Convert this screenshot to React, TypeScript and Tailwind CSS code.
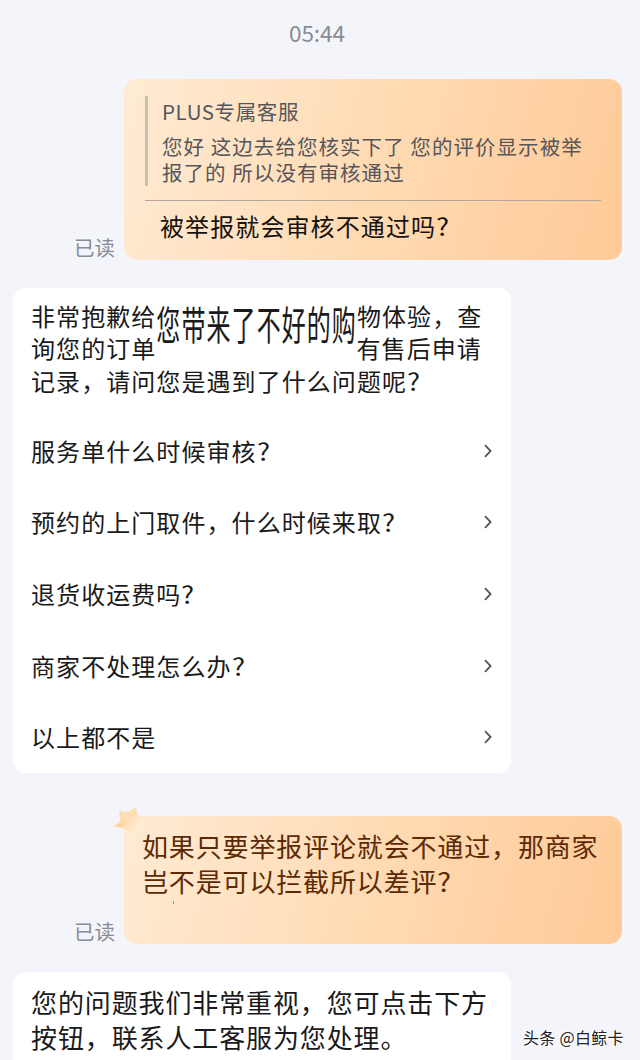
import type { ReactNode } from "react";

const questions = [
  "服务单什么时候审核",
  "预约的上门取件，什么时候来取",
  "退货收运费吗",
  "商家不处理怎么办",
];

interface SentMessageProps {
  className?: string;
  children: ReactNode;
}

function SentMessage({ className = "", children }: SentMessageProps) {
  return (
    <div className="flex items-end justify-end pr-[18px]">
      <span className="mr-[9px] text-[20.5px] leading-[26px] text-[#888b93]">已读</span>
      <div
        className={`relative w-[498px] rounded-[13px] bg-[linear-gradient(105deg,#ffebd4_0%,#ffd9b0_55%,#ffca98_100%)] ${className}`}
      >
        {children}
      </div>
    </div>
  );
}

function QuestionMark() {
  return <span className="inline-block origin-left scale-x-[1.15]">?</span>;
}

function QuestionRow({ children }: { children: ReactNode }) {
  return (
    <li className="flex h-[71.7px] items-center justify-between pr-px">
      <span>{children}</span>
      <svg className="h-[14px] w-[8px]" viewBox="0 0 8 14" fill="none">
        <path d="M1 1.2 6.6 7 1 12.8" stroke="#55565a" strokeWidth="1.8" />
      </svg>
    </li>
  );
}

function StarBadge() {
  return (
    <svg className="absolute -top-[9px] -left-[10px] h-[27px] w-[28px]" viewBox="0 0 28 27" fill="none">
      <defs>
        <linearGradient id="star" x1="2" y1="4" x2="24" y2="20" gradientUnits="userSpaceOnUse">
          <stop stopColor="#ffd49c" />
          <stop offset="0.5" stopColor="#ffdeb4" />
          <stop offset="1" stopColor="#ffe9d0" />
        </linearGradient>
      </defs>
      <path
        d="M5 5.2Q5 4 6.5 4.3L13 5.2Q16 4.6 20.5.8Q22 .2 22.2 1.8L23 6Q24 8.5 27 10L19 24 10 22Q7 19.5.8 20Q-.6 19.3.8 18.4Q6.3 14.8 6.6 12.5Z"
        fill="url(#star)"
      />
      <path d="M5.4 5 14 14 12.8 5.6Z" fill="#ffe3bd" opacity=".6" />
      <path d="M21.8 1.2 15 14 22.8 6Z" fill="#ffcf95" opacity=".4" />
      <path d="M.8 19.2 13 15 8.6 20Z" fill="#f9c48b" opacity=".5" />
    </svg>
  );
}

export default function App() {
  return (
    <main className="h-[1060px] w-[640px] overflow-hidden bg-[#f4f5fb] pt-[16px] font-['Noto_Sans_CJK_SC',sans-serif] text-[#1a1a1a]">
      <time className="block h-[34px] pr-[6px] text-center text-[22.5px] leading-[32px] text-[#888b93]">
        05:44
      </time>

      <div className="mt-[29px]">
        <SentMessage className="h-[181px] px-[21px] pt-[17px]">
          <div className="h-[90px] border-l-[3px] border-[#c9bfae] pl-[14px] text-[#55565b]">
            <p className="pt-px text-[20.5px] leading-[28px] tracking-[0.6px]">PLUS专属客服</p>
            <div className="pt-[9px] text-[20.5px] leading-[25.5px] tracking-[1.05px] whitespace-nowrap">
              <p>您好 这边去给您核实下了 您的评价显示被举</p>
              <p>报了的 所以没有审核通过</p>
            </div>
          </div>
          <div className="mt-[14px] h-px bg-[#b3a79b]" />
          <p className="mt-[9px] pl-[15px] text-[24px] leading-[32px] tracking-[1.1px] text-[#15120f]">
            被举报就会审核不通过吗
            <QuestionMark />
          </p>
        </SentMessage>
      </div>

      <section className="mt-[28px] ml-[13px] h-[485px] w-[498px] rounded-[13px] bg-white px-[18px] pt-[12px] text-[24px] tracking-[1.07px] whitespace-nowrap">
        <div className="leading-[32.3px]">
          <p>
            非常抱歉给
            <span className="inline-block h-[32px] origin-[0_5px] scale-y-[1.67] align-top">您带来了不好的购</span>
            物体验，查
          </p>
          <p className="flex">
            <span className="w-[325.5px]">询您的订单</span>
            <span>有售后申请</span>
          </p>
          <p>
            记录，请问您是遇到了什么问题呢
            <QuestionMark />
          </p>
        </div>
        <ul className="mt-[18px]">
          {questions.map((question) => (
            <QuestionRow key={question}>
              {question}
              <QuestionMark />
            </QuestionRow>
          ))}
          <QuestionRow>以上都不是</QuestionRow>
        </ul>
      </section>

      <div className="mt-[43px]">
        <SentMessage className="h-[128px] px-[18px] pt-[12px]">
          <StarBadge />
          <p className="text-[26px] leading-[35px] tracking-[0.85px] whitespace-nowrap text-[#5c2a05]">
            如果只要举报评论就会不通过，那商家
            <br />
            岂不是可以拦截所以差评
            <QuestionMark />
          </p>
          <span className="absolute top-[85px] left-[49px] h-[3px] w-px bg-[#a98c73]" />
        </SentMessage>
      </div>

      <div className="mt-[28px] flex items-start">
        <section className="ml-[13px] h-[104px] w-[498px] shrink-0 rounded-[13px] bg-white px-[18px] pt-[12px] text-[26px] leading-[35.3px] tracking-[0.88px] whitespace-nowrap">
          您的问题我们非常重视，您可点击下方
          <br />
          按钮，联系人工客服为您处理。
        </section>
        <span className="mt-[53px] ml-[12px] text-[16px] leading-[24px] tracking-[0.3px] whitespace-nowrap text-[#222] [text-shadow:-1px_-1px_0_#fff,1px_1px_0_#fff]">
          头条 @白鲸卡
        </span>
      </div>
    </main>
  );
}
